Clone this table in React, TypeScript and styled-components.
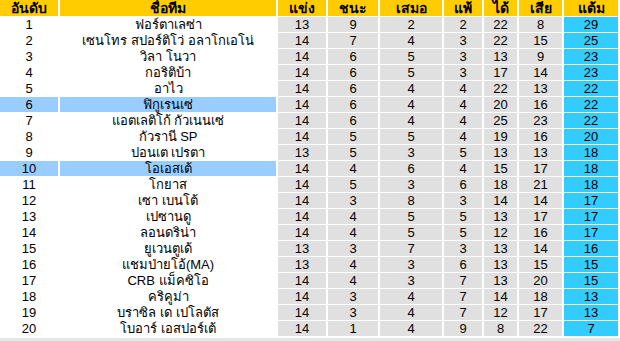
import React from 'react';
import styled, { createGlobalStyle } from 'styled-components';

const GlobalStyle = createGlobalStyle`
  html, body {
    margin: 0;
    padding: 0;
    background: #ffffff;
  }
  body {
    font-family: Tahoma, "Liberation Sans", "Noto Sans", sans-serif;
    font-size: 13px;
    color: #000000;
  }
`;

const Wrapper = styled.div`
  width: 620px;
  overflow: hidden;
`;

const Table = styled.table`
  border-collapse: separate;
  border-spacing: 2px 1px;
  margin: -1px -2px 0 -2px;
  table-layout: fixed;
`;

const HeadCell = styled.th`
  background: #ffcc00;
  height: 16px;
  padding: 0;
  font-size: 14px;
  font-weight: bold;
  text-align: center;
  line-height: 16px;
  white-space: nowrap;
`;

const Cell = styled.td<{ $kind: 'team' | 'stat' | 'points'; $highlight?: boolean }>`
  height: 15px;
  padding: 0;
  line-height: 15px;
  text-align: center;
  white-space: nowrap;
  background: ${(p) =>
    p.$kind === 'points'
      ? '#33ccff'
      : p.$kind === 'stat'
      ? '#e0e0e0'
      : p.$highlight
      ? '#99ccff'
      : '#ffffff'};
`;

const BottomBar = styled.div`
  height: 4px;
  margin-top: 1px;
  background: #e6e6e6;
`;

type Row = [number, string, number, number, number, number, number, number, number];

const rows: Row[] = [
  [1, 'ฟอร์ตาเลซ่า', 13, 9, 2, 2, 22, 8, 29],
  [2, 'เซนโทร สปอร์ติโว่ อลาโกเอโน่', 14, 7, 4, 3, 22, 15, 25],
  [3, 'วิลา โนวา', 14, 6, 5, 3, 13, 9, 23],
  [4, 'กอริติบ้า', 14, 6, 5, 3, 17, 14, 23],
  [5, 'อาไว', 14, 6, 4, 4, 22, 13, 22],
  [6, 'ฟิกูเรนเซ่', 14, 6, 4, 4, 20, 16, 22],
  [7, 'แอตเลติโก้ กัวเนนเซ่', 14, 6, 4, 4, 25, 23, 22],
  [8, 'กัวรานี SP', 14, 5, 5, 4, 19, 16, 20],
  [9, 'ปอนเต เปรตา', 13, 5, 3, 5, 13, 13, 18],
  [10, 'โอเอสเต้', 14, 4, 6, 4, 15, 17, 18],
  [11, 'โกยาส', 14, 5, 3, 6, 18, 21, 18],
  [12, 'เซา เบนโต้', 14, 3, 8, 3, 14, 14, 17],
  [13, 'เปซานดู', 14, 4, 5, 5, 13, 17, 17],
  [14, 'ลอนดริน่า', 14, 4, 5, 5, 12, 16, 17],
  [15, 'ยูเวนตูเด้', 13, 3, 7, 3, 13, 14, 16],
  [16, 'แชมป่ายโอ้(MA)', 13, 4, 3, 6, 13, 15, 15],
  [17, 'CRB แม็คซิโอ', 14, 4, 3, 7, 13, 20, 15],
  [18, 'คริคูม่า', 14, 3, 4, 7, 14, 18, 13],
  [19, 'บราซิล เด เปโลตัส', 14, 3, 4, 7, 12, 17, 13],
  [20, 'โบอาร์ เอสปอร์เต้', 14, 1, 4, 9, 8, 22, 7],
];

const highlighted = [6, 10];

const columns = [
  { label: 'อันดับ', width: 58 },
  { label: 'ชื่อทีม', width: 216 },
  { label: 'แข่ง', width: 48 },
  { label: 'ชนะ', width: 50 },
  { label: 'เสมอ', width: 62 },
  { label: 'แพ้', width: 38 },
  { label: 'ได้', width: 33 },
  { label: 'เสีย', width: 43 },
  { label: 'แต้ม', width: 54 },
];

export default function App() {
  return (
    <Wrapper>
      <GlobalStyle />
      <Table>
        <colgroup>
          {columns.map((c) => (
            <col key={c.label} style={{ width: c.width }} />
          ))}
        </colgroup>
        <thead>
          <tr>
            {columns.map((c) => (
              <HeadCell key={c.label}>{c.label}</HeadCell>
            ))}
          </tr>
        </thead>
        <tbody>
          {rows.map((r) => {
            const hl = highlighted.includes(r[0]);
            return (
              <tr key={r[0]}>
                <Cell $kind="team" $highlight={hl}>{r[0]}</Cell>
                <Cell $kind="team" $highlight={hl}>{r[1]}</Cell>
                {r.slice(2, 8).map((v, i) => (
                  <Cell key={i} $kind="stat">{v}</Cell>
                ))}
                <Cell $kind="points">{r[8]}</Cell>
              </tr>
            );
          })}
        </tbody>
      </Table>
      <BottomBar />
    </Wrapper>
  );
}
